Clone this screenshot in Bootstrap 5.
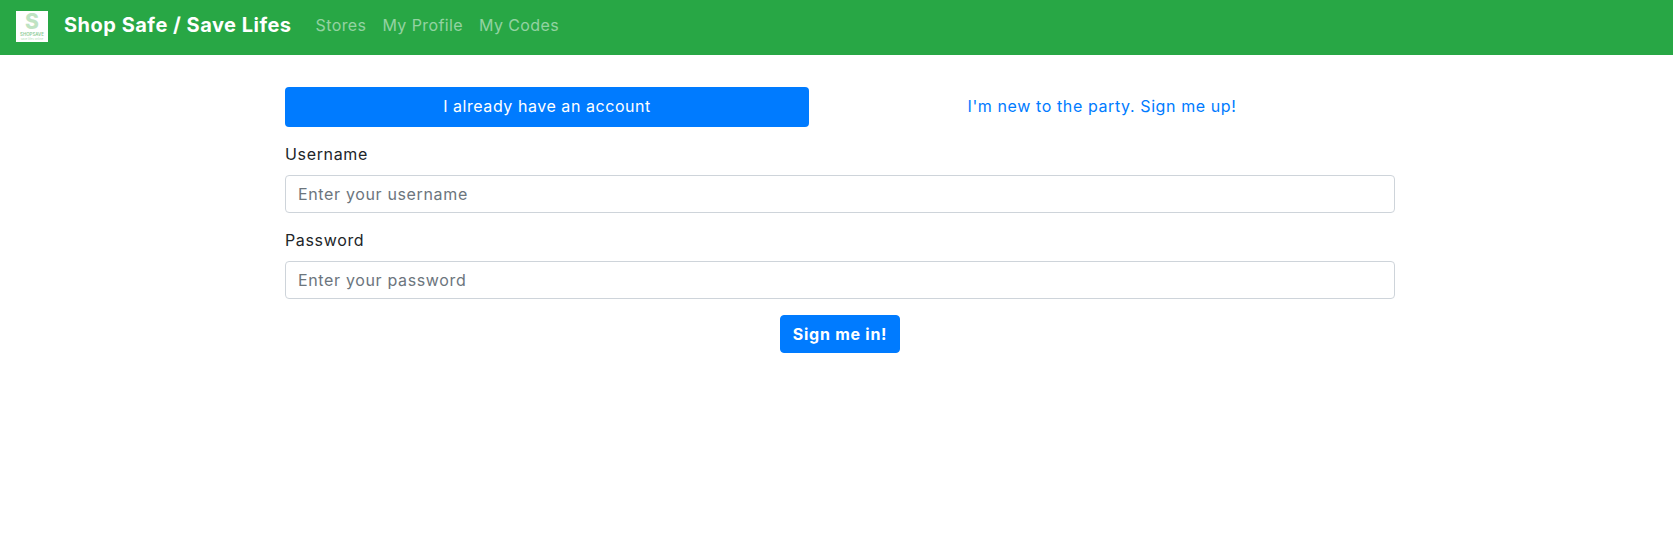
<!DOCTYPE html>
<html lang="en">
<head>
<meta charset="utf-8">
<title>Shop Safe / Save Lifes</title>
<link href="https://cdn.jsdelivr.net/npm/bootstrap@5.3.0/dist/css/bootstrap.min.css" rel="stylesheet">
<style>
body { font-family: "Inter", "Open Sans", sans-serif; color: #212529; background: #fff; font-size: 16px; letter-spacing: .55px; }
.top-bar { background: #28a745; height: 55px; padding: 0 16px 6px; }
.logo-box { width: 32px; height: 31px; background: #fff; margin: 4px 16px 0 0; color: #b5dfb9; line-height: 1; }
.logo-s { font-size: 21px; font-weight: 800; line-height: 21px; letter-spacing: 0; color: #bfe3c3; }
.logo-t { font-size: 4.4px; line-height: 5px; color: #8ccb97; letter-spacing: 0; white-space: nowrap; font-weight: 600; }
.logo-u { font-size: 3px; line-height: 3px; margin-top: 1px; color: #b5dfb9; letter-spacing: 0; white-space: nowrap; }
.brand-name { color: #fff; font-size: 20px; font-weight: 700; margin-right: 16px; line-height: 30px; text-decoration: none; letter-spacing: .5px; }
.top-link { color: rgba(255,255,255,.5); padding: 8px; text-decoration: none; line-height: 24px; letter-spacing: .4px; }
.form-wrap { width: 1110px; margin: 32px 0 0 285px; }
.tab-first, .tab-second { height: 40px; padding: 7px 16px 9px; border-radius: 4px; line-height: 24px; }
.tab-first { flex: 0 0 524px; background: #007bff; color: #fff; }
.tab-second { flex: 1 1 auto; color: #007bff; letter-spacing: .6px; }
.field-label { display: block; margin: -1px 0 9px; line-height: 24px; letter-spacing: .65px; }
.form-control { height: 38px; padding: 6px 12px; border-color: #ced4da; border-radius: 4px; font-size: 16px; color: #495057; letter-spacing: .65px; }
.form-control::placeholder { color: #6c757d; opacity: 1; }
.field-group { margin-bottom: 16px; }
.submit-btn { background: #007bff; border-color: #007bff; color: #fff; font-weight: 700; height: 38px; border-radius: 4px; padding: 6px 8px; width: 120px; letter-spacing: .75px; }
</style>
</head>
<body>
<nav class="top-bar d-flex align-items-center">
  <a class="logo-box d-flex flex-column align-items-center text-decoration-none" href="#">
    <span class="logo-s">S</span>
    <span class="logo-t">SHOPSAVE</span>
    <span class="logo-u">save lifes online</span>
  </a>
  <a class="brand-name" href="#">Shop Safe / Save Lifes</a>
  <a class="top-link" href="#">Stores</a>
  <a class="top-link" href="#">My Profile</a>
  <a class="top-link" href="#">My Codes</a>
</nav>
<main class="form-wrap">
  <div class="d-flex text-center mb-3">
    <a class="tab-first text-decoration-none" href="#">I already have an account</a>
    <a class="tab-second text-decoration-none" href="#">I'm new to the party. Sign me up!</a>
  </div>
  <form>
    <div class="field-group">
      <label class="field-label" for="u">Username</label>
      <input id="u" class="form-control" type="text" placeholder="Enter your username">
    </div>
    <div class="field-group">
      <label class="field-label" for="p">Password</label>
      <input id="p" class="form-control" type="password" placeholder="Enter your password">
    </div>
    <div class="text-center">
      <button type="button" class="btn submit-btn">Sign me in!</button>
    </div>
  </form>
</main>
<script src="https://cdn.jsdelivr.net/npm/bootstrap@5.3.0/dist/js/bootstrap.bundle.min.js"></script>
</body>
</html>
